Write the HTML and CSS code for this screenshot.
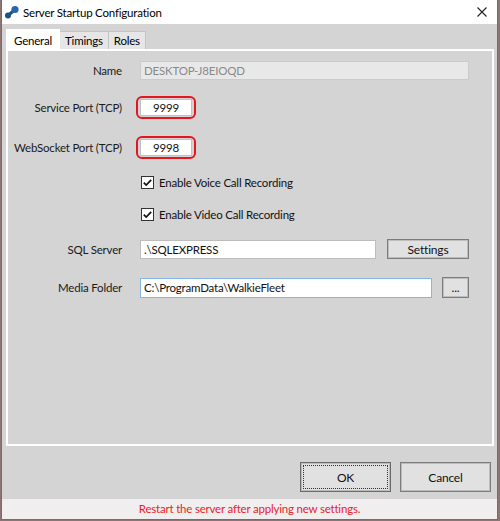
FILE: index.html
```html
<!DOCTYPE html>
<html>
<head>
<meta charset="utf-8">
<link rel="stylesheet" href="styles.css">
</head>
<body>
<div class="window">
  <div class="titlebar">
    <svg class="app-icon" width="16" height="16" viewBox="0 0 16 16">
      <line x1="4" y1="11.5" x2="10.5" y2="6" stroke="#1d4f91" stroke-width="3"/>
      <circle cx="4" cy="11.5" r="3" fill="#1d4f91"/>
      <circle cx="11" cy="5.5" r="3.6" fill="#2a64ad"/>
    </svg>
    <span class="title">Server Startup Configuration</span>
    <svg class="close" width="10" height="10" viewBox="0 0 10 10">
      <path d="M0.5 0.5 L9.5 9.5 M9.5 0.5 L0.5 9.5" stroke="#222" stroke-width="1.1"/>
    </svg>
  </div>
  <div class="client">
    <div class="tabs">
      <div class="tab active">General</div>
      <div class="tab">Timings</div>
      <div class="tab">Roles</div>
    </div>
    <div class="panel">
      <div class="row r-name">
        <label class="lbl">Name</label>
        <div class="input disabled w-name">DESKTOP-J8EIOQD</div>
      </div>
      <div class="row r-port1">
        <label class="lbl">Service Port (TCP)</label>
        <span class="mark"><span class="input port">9999</span></span>
      </div>
      <div class="row r-port2">
        <label class="lbl">WebSocket Port (TCP)</label>
        <span class="mark"><span class="input port">9998</span></span>
      </div>
      <div class="row r-check1">
        <span class="lbl"></span>
        <span class="check">
          <svg width="13" height="13" viewBox="0 0 13 13"><rect x="0.5" y="0.5" width="12" height="12" fill="#fff" stroke="#333"/><path d="M2.8 6.6 L5.2 9 L10.2 3.8" fill="none" stroke="#111" stroke-width="1.7"/></svg>
          Enable Voice Call Recording
        </span>
      </div>
      <div class="row r-check2">
        <span class="lbl"></span>
        <span class="check">
          <svg width="13" height="13" viewBox="0 0 13 13"><rect x="0.5" y="0.5" width="12" height="12" fill="#fff" stroke="#333"/><path d="M2.8 6.6 L5.2 9 L10.2 3.8" fill="none" stroke="#111" stroke-width="1.7"/></svg>
          Enable Video Call Recording
        </span>
      </div>
      <div class="row r-sql">
        <label class="lbl">SQL Server</label>
        <div class="input w-sql">.\SQLEXPRESS</div>
        <button class="btn btn-settings">Settings</button>
      </div>
      <div class="row r-media">
        <label class="lbl">Media Folder</label>
        <div class="input focused w-media">C:\ProgramData\WalkieFleet</div>
        <button class="btn btn-dots">...</button>
      </div>
    </div>
    <div class="buttons">
      <button class="btn btn-main default"><span class="focusring">OK</span></button>
      <button class="btn btn-main">Cancel</button>
    </div>
  </div>
  <div class="status">Restart the server after applying new settings.</div>
</div>
</body>
</html>
```

FILE: styles.css
```css
html, body {
  margin: 0;
  padding: 0;
  background: #8e7474;
}
body {
  width: 500px;
  height: 521px;
  overflow: hidden;
  font-family: Lato, "Liberation Sans", Arial, sans-serif;
  font-size: 11.5px;
  letter-spacing: -0.2px;
  color: #000;
  white-space: nowrap;
}
.window {
  margin-left: 1px;
  width: 495px;
  height: 519px;
  border-left: 1px solid #6f6f6f;
  border-right: 1px solid #6f6f6f;
  border-bottom: 1px solid #6f6f6f;
  background: #d4d4d4;
  display: flex;
  flex-direction: column;
}
.titlebar {
  height: 24px;
  background: #ffffff;
  display: flex;
  align-items: center;
  position: relative;
}
.app-icon {
  margin-left: 2px;
  margin-right: 3px;
}
.title {
  color: #000;
  font-size: 11.5px;
}
.close {
  margin-left: auto;
  margin-right: 10px;
}
.client {
  flex: 1;
  padding: 3px 3px 0 4px;
  display: flex;
  flex-direction: column;
}
.tabs {
  display: flex;
  align-items: flex-end;
  height: 22px;
}
.tab {
  height: 17px;
  line-height: 17px;
  padding: 0 5px;
  background: #e6e6e6;
  border: 1px solid #c4c4c4;
  border-bottom: none;
  margin-left: -1px;
  color: #000;
}
.tab.active {
  height: 21px;
  line-height: 21px;
  background: #ffffff;
  border-color: #ffffff;
  margin-left: 0;
  padding: 0 7px;
  position: relative;
  z-index: 1;
  margin-bottom: -2px;
}
.panel {
  height: 393px;
  border: 2px solid #ffffff;
  background: #d4d4d4;
  position: relative;
}
.row {
  display: flex;
  align-items: center;
}
.lbl {
  width: 114px;
  text-align: right;
  margin-right: 18px;
  color: #1a1a1a;
  flex: none;
}
.input {
  box-sizing: border-box;
  height: 19px;
  line-height: 17px;
  border: 1px solid #bdbdbd;
  background: #ffffff;
  padding: 0 3px;
  color: #111;
}
.input.disabled {
  background: #e8e8e8;
  border-color: #cbcbcb;
  color: #8a8a8a;
}
.input.focused {
  border-color: #86b6e4;
  height: 20px;
  line-height: 18px;
}
.w-name { width: 329px; }
.w-sql { width: 236px; }
.w-media { width: 292px; }
.r-name { margin-top: 10px; }
.r-port1 { margin-top: 16px; }
.r-port2 { margin-top: 17px; }
.r-check1 { margin-top: 16px; }
.r-check2 { margin-top: 18px; }
.r-sql { margin-top: 18px; }
.r-media { margin-top: 18px; }
.mark {
  display: inline-block;
  margin-left: -4px;
  border: 2px solid #e2161d;
  border-radius: 6px;
  padding: 1px 2px;
}
.input.port {
  display: block;
  width: 52px;
  height: 17px;
  line-height: 16px;
  text-align: center;
  border-color: #b9c3c9;
}
.check {
  display: flex;
  align-items: center;
  margin-left: 1px;
  height: 14px;
  color: #111;
}
.check svg {
  margin-right: 5px;
}
.btn {
  font-family: inherit;
  font-size: 12px;
  letter-spacing: -0.2px;
  color: #111;
  background: #e1e1e1;
  border: 1px solid #7c7c7c;
  box-shadow: inset 0 0 0 1px #bdbdbd;
  padding: 0;
  margin: 0;
}
.btn-settings {
  width: 82px;
  height: 20px;
  margin-left: 11px;
}
.btn-dots {
  width: 27px;
  height: 21px;
  margin-left: 10px;
  line-height: 14px;
}
.buttons {
  display: flex;
  justify-content: flex-end;
  gap: 9px;
  padding-right: 3px;
  margin-top: 16px;
}
.btn-main {
  width: 91px;
  height: 30px;
}
.default {
  border-color: #6a6a6a;
  padding: 2px;
}
.focusring {
  display: flex;
  align-items: center;
  justify-content: center;
  width: 100%;
  height: 100%;
  box-sizing: border-box;
  border: 1px dotted #333;
}
.status {
  margin-top: auto;
  height: 20px;
  background: #f0eeee;
  color: #e8232b;
  text-align: center;
  line-height: 19px;
  font-size: 11.5px;
}
```
